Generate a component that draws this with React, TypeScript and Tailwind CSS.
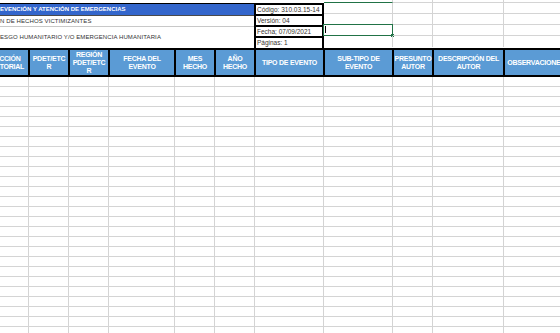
import React from 'react';

type Col = { w: string; label: string[] };

// widths include the 1px right grid line
const COLS: Col[] = [
  { w: 'w-[53px] -ml-[24px]', label: ['DIRECCIÓN', 'TERRITORIAL'] },
  { w: 'w-[40px]', label: ['PDET/ETC', 'R'] },
  { w: 'w-[40px]', label: ['REGIÓN', 'PDET/ETC', 'R'] },
  { w: 'w-[66px]', label: ['FECHA DEL', 'EVENTO'] },
  { w: 'w-[40px]', label: ['MES', 'HECHO'] },
  { w: 'w-[40px]', label: ['AÑO', 'HECHO'] },
  { w: 'w-[69px]', label: ['TIPO DE EVENTO'] },
  { w: 'w-[69px]', label: ['SUB-TIPO DE', 'EVENTO'] },
  { w: 'w-[40px]', label: ['PRESUNTO', 'AUTOR'] },
  { w: 'w-[71px]', label: ['DESCRIPCIÓN DEL', 'AUTOR'] },
  { w: 'w-[64px]', label: ['OBSERVACIONES'] },
];

const RIGHT_COLS = COLS.slice(7);
const ROWS = Array.from({ length: 26 }, (_, i) => i);

function InfoBox() {
  const rows = ['Código: 310.03.15-14', 'Versión: 04', 'Fecha; 07/09/2021', 'Páginas: 1'];
  return (
    <div className="w-[70px] shrink-0 flex flex-col border-x-2 border-t-2 border-black">
      {rows.map((r, i) => (
        <div
          key={r}
          className={`pl-[1px] text-[6.5px] text-[#3a3430] flex items-center ${
            i < 3 ? 'h-[11px] border-b-2 border-black' : 'h-[10px]'
          }`}
        >
          {r}
        </div>
      ))}
    </div>
  );
}

function TopRightGrid() {
  return (
    <div className="flex">
      {RIGHT_COLS.map((c, ci) => (
        <div key={ci} className={`${c.w.split(' ')[0]} shrink-0 flex flex-col`}>
          {[0, 1, 2, 3].map((r) => (
            <div
              key={r}
              className={`relative border-r border-[#d4d4d4] ${
                r < 3 ? 'h-[11px] border-b' : 'h-[11px]'
              }`}
            >
              {/* active cell */}
              {ci === 0 && r === 2 && (
                <div className="absolute -left-[1px] -top-[1px] w-[70px] h-[12px] border border-[#217346]">
                  <div className="absolute left-[1px] top-[1px] w-px h-[7px] bg-black" />
                  <div className="absolute -right-[2px] -bottom-[2px] w-[3px] h-[3px] bg-[#217346]" />
                </div>
              )}
            </div>
          ))}
        </div>
      ))}
    </div>
  );
}

export default function App() {
  return (
    <div className="w-[560px] h-[333px] overflow-hidden bg-white font-['Liberation_Sans',Arial,sans-serif]">
      {/* strip above the form */}
      <div className="flex h-[3px]">
        <div className="w-[324px] shrink-0" />
        {RIGHT_COLS.map((c, i) => (
          <div
            key={i}
            className={`${c.w.split(' ')[0]} shrink-0 border-r border-b border-[#d4d4d4] ${
              i === 0 ? 'border-b-[#217346]' : ''
            }`}
          />
        ))}
      </div>

      {/* form heading */}
      <div className="flex h-[45px]">
        <div className="w-[254px] shrink-0 flex flex-col">
          <div className="h-px bg-black" />
          <div className="h-[11px] bg-[#3366cc] text-white font-bold text-[6px] leading-[11px] whitespace-nowrap">
            EVENCIÓN Y ATENCIÓN DE EMERGENCIAS
          </div>
          <div className="h-px bg-[#4a4a4a]" />
          <div className="h-[10px] text-[6px] leading-[10px] text-[#333] tracking-[0.1px] whitespace-nowrap">
            N DE HECHOS VICTIMIZANTES
          </div>
          <div className="h-px bg-[#c8c8c8]" />
          <div className="flex-1 flex items-center text-[6px] text-[#333] tracking-[0.1px] whitespace-nowrap">
            ESGO HUMANITARIO Y/O EMERGENCIA HUMANITARIA
          </div>
        </div>
        <InfoBox />
        <TopRightGrid />
      </div>

      {/* column headers */}
      <div className="flex h-[29px] border-y-2 border-black bg-[#5b9bd5]">
        {COLS.map((c, i) => (
          <div
            key={i}
            className={`${c.w} shrink-0 border-r border-black ${
              i > 0 ? 'border-l' : ''
            } flex flex-col items-center justify-center text-white font-bold text-[7px] leading-[8px] tracking-[-0.25px] whitespace-nowrap text-center`}
          >
            {c.label.map((l) => (
              <span key={l}>{l}</span>
            ))}
          </div>
        ))}
      </div>

      {/* empty data rows */}
      {ROWS.map((r) => (
        <div key={r} className="flex h-[10px]">
          {COLS.map((c, i) => (
            <div key={i} className={`${c.w} shrink-0 border-r border-b border-[#d4d4d4]`} />
          ))}
        </div>
      ))}
    </div>
  );
}
